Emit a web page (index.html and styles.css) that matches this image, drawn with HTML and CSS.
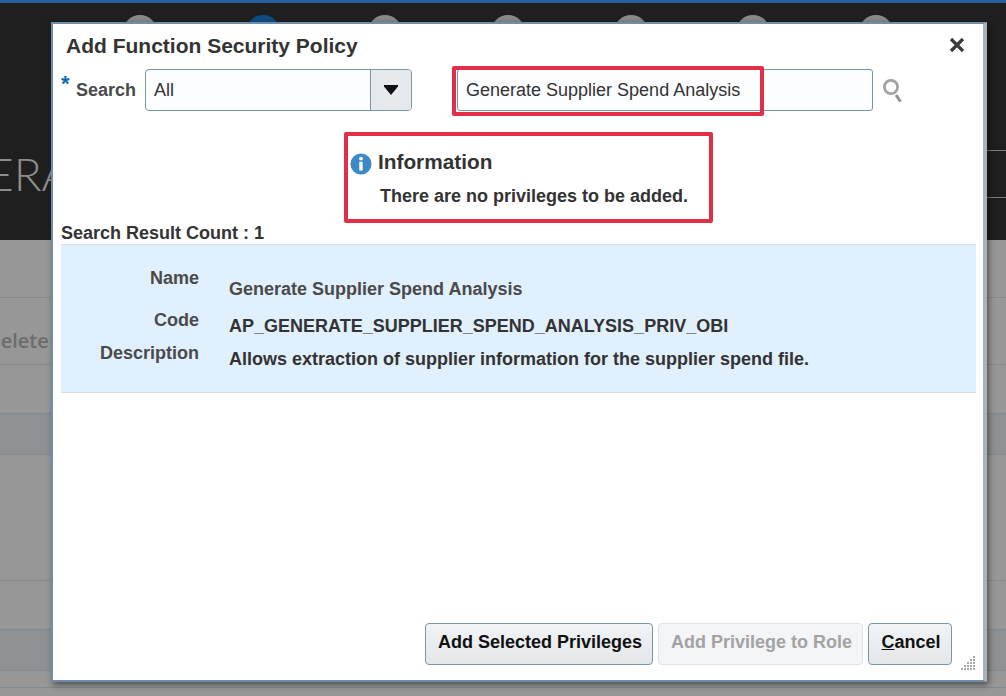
FILE: index.html
```html
<!DOCTYPE html>
<html lang="en">
<head>
<meta charset="utf-8">
<title>Add Function Security Policy</title>
<link rel="stylesheet" href="styles.css">
</head>
<body>
<div class="page">
  <header class="hero">
    <div class="train">
      <span class="stop"></span><span class="stop stop-active"></span><span class="stop"></span><span class="stop"></span><span class="stop"></span><span class="stop"></span><span class="stop"></span>
    </div>
    <div class="hero-title">ERAL</div>
    <div class="hero-lines"><span></span><span></span></div>
  </header>
  <div class="table">
    <div class="row r1"></div>
    <div class="row r2"><span class="delete">Delete</span></div>
    <div class="row r3"></div>
    <div class="row r4 shade"></div>
    <div class="row r5"></div>
    <div class="row r6"></div>
    <div class="row r7 shade"></div>
    <div class="row r8"></div>
  </div>
</div>

<section class="dialog">
  <div class="title-row">
    <h1 class="title">Add Function Security Policy</h1>
    <svg class="close" width="16" height="16" viewBox="0 0 16 16" aria-label="Close"><path d="M2 2 14 14M14 2 2 14" stroke="#3c3c3c" stroke-width="3.2" fill="none"/></svg>
  </div>
  <div class="search-row">
    <span class="req">*</span>
    <label class="search-label">Search</label>
    <div class="select">
      <span class="select-value">All</span>
      <span class="select-btn"><svg width="14" height="10" viewBox="0 0 14 10"><path d="M0 0H14V1.5L7 10 0 1.5Z" fill="#111"/></svg></span>
    </div>
    <div class="input">Generate Supplier Spend Analysis<span class="mark mark-input"></span></div>
    <svg class="magnifier" width="22" height="26" viewBox="0 0 22 26"><circle cx="9" cy="9" r="6.6" fill="none" stroke="#a3a3a3" stroke-width="2.8"/><path d="M14 17 18.5 23.5" stroke="#8f8f8f" stroke-width="3" fill="none"/></svg>
  </div>
  <div class="info">
    <div class="info-head">
      <svg class="info-icon" width="22" height="22" viewBox="0 0 22 22"><circle cx="11" cy="11" r="10.5" fill="#3b8ac6"/><circle cx="11" cy="5.6" r="1.9" fill="#fff"/><rect x="9.3" y="8.8" width="3.4" height="8.8" fill="#fff"/></svg>
      <span class="info-title">Information</span>
    </div>
    <p class="info-text">There are no privileges to be added.</p>
    <span class="mark mark-info"></span>
  </div>
  <div class="count">Search Result Count : 1</div>
  <div class="result">
    <div class="label l-name">Name</div><div class="value v-name">Generate Supplier Spend Analysis</div>
    <div class="label l-code">Code</div><div class="value v-code">AP_GENERATE_SUPPLIER_SPEND_ANALYSIS_PRIV_OBI</div>
    <div class="label l-desc">Description</div><div class="value v-desc">Allows extraction of supplier information for the supplier spend file.</div>
  </div>
  <div class="spacer"></div>
  <div class="actions">
    <button class="btn btn-add" type="button">Add Selected Privileges</button>
    <button class="btn btn-off" type="button" disabled>Add Privilege to Role</button>
    <button class="btn btn-cancel" type="button"><u>C</u>ancel</button>
  </div>
  <svg class="grip" width="14" height="14" viewBox="0 0 14 14"><path d="M12 0h2v2h-2zM12 3h2v2h-2zM9 3h2v2H9zM12 6h2v2h-2zM9 6h2v2H9zM6 6h2v2H6zM12 9h2v2h-2zM9 9h2v2H9zM6 9h2v2H6zM3 9h2v2H3zM12 12h2v2h-2zM9 12h2v2H9zM6 12h2v2H6zM3 12h2v2H3zM0 12h2v2H0z" fill="#a9a9a9"/></svg>
</section>
</body>
</html>
```
FILE: styles.css
```css
* { box-sizing: border-box; }
html, body { margin: 0; height: 100%; }
body { width: 1006px; height: 696px; overflow: hidden; position: relative; background: #979797; font-family: "Liberation Sans", Arial, sans-serif; color: #333; }

.page { display: flex; flex-direction: column; height: 696px; }
.hero { height: 240px; background: #1f1f1f; border-top: 3px solid #28609b; position: relative; overflow: hidden; flex: none; }
.train { display: flex; gap: 88.67px; padding: 12px 0 0 123px; }
.stop { width: 34px; height: 34px; border-radius: 50%; background: linear-gradient(#8c8c8c, #5f5f5f); flex: none; }
.stop-active { background: #0f4c82; }
.hero-title { position: absolute; left: -13px; top: 141px; font-family: Lato, sans-serif; font-weight: 300; font-size: 46px; line-height: 60px; color: #8d8d8d; white-space: nowrap; }
.hero-lines { position: absolute; right: 0; top: 147px; width: 19px; display: flex; flex-direction: column; gap: 46px; }
.hero-lines span { height: 1px; background: #7d7d7d; }

.table { flex: 1; display: flex; flex-direction: column; }
.row { border-bottom: 1px solid #808a90; flex: none; }
.r1 { height: 58px; }
.r2 { height: 67px; display: flex; align-items: center; padding-top: 18px; }
.r3 { height: 49px; }
.r4 { height: 41px; }
.r5 { height: 126px; }
.r6 { height: 49px; }
.r7 { height: 41px; }
.r8 { height: 17px; }
.shade { background: #8f9091; }
.delete { font-family: "Open Sans", sans-serif; font-size: 20px; font-weight: 600; color: #6c6c6c; margin-left: -14px; }

.dialog { position: absolute; left: 51px; top: 22px; width: 936px; height: 660px; background: #fff; border: 2px solid #6f8ca8; border-right: 4px solid #a8b2bb; box-shadow: 2px 3px 6px rgba(0,0,0,.45); display: flex; flex-direction: column; padding: 0 7px 0 8px; }

.title-row { display: flex; justify-content: space-between; align-items: center; height: 43px; padding: 1px 11px 1px 5px; flex: none; }
.title { margin: 0; font-size: 21px; font-weight: 700; color: #333; }
.close { margin-top: -1px; }

.search-row { height: 42px; display: flex; align-items: center; flex: none; position: relative; margin-top: 2px; }
.req { color: #0f6ab4; font-size: 22px; font-weight: 700; width: 15px; align-self: flex-start; line-height: 30px; }
.search-label { font-size: 18px; font-weight: 700; color: #4a4a4a; width: 69px; }
.select { width: 267px; height: 42px; border: 1px solid #7b95a8; border-radius: 4px; background: #fbfdff; display: flex; }
.select-value { flex: 1; font-size: 18px; line-height: 40px; padding-left: 8px; color: #333; }
.select-btn { width: 41px; background: #e6e9ec; border-left: 1px solid #7b95a8; border-radius: 0 3px 3px 0; display: flex; align-items: center; justify-content: center; }
.input { margin-left: 45px; width: 416px; height: 42px; border: 1px solid #7b95a8; border-radius: 3px; background: #fbfdff; font-size: 18px; line-height: 40px; padding-left: 8px; color: #333; position: relative; }
.magnifier { margin-left: 9px; margin-top: 2px; }

.mark { position: absolute; border: 4px solid #e22f47; border-radius: 2px; pointer-events: none; }
.mark-input { left: -6px; top: -4px; width: 312px; height: 50px; }

.info { position: relative; margin: 21px 0 0 283px; width: 369px; height: 91px; padding: 17px 0 0 6px; flex: none; }
.mark-info { inset: 0; }
.info-head { display: flex; align-items: center; gap: 6px; height: 26px; }
.info-icon { margin-top: 4px; }
.info-title { font-size: 20.8px; font-weight: 700; color: #333; }
.info-text { margin: 11px 0 0 30px; font-size: 18px; font-weight: 700; color: #333; line-height: 20px; }

.count { font-size: 18px; font-weight: 700; color: #333; height: 21px; line-height: 20px; flex: none; }
.result { flex: none; height: 149px; background: #e1f0fd; border-top: 1px solid #d9dfe4; border-bottom: 1px solid #d9dfe4; display: grid; grid-template-columns: 138px 1fr; column-gap: 30px; grid-template-rows: 34px 36px 33px; align-content: start; padding-top: 24px; font-size: 18px; }
.label { font-size: 18px; font-weight: 700; color: #4a4a4a; text-align: right; margin-top: -1px; }
.value { font-weight: 700; color: #333; }
.v-name { padding-top: 10px; color: #4a4a4a; }
.v-code { padding-top: 13px; }
.v-desc { padding-top: 10px; }
.l-code { padding-top: 8px; }
.l-desc { padding-top: 5px; }

.spacer { flex: 1; }
.actions { display: flex; justify-content: flex-end; gap: 5px; padding-right: 24px; margin-bottom: 15px; flex: none; }
.btn { height: 42px; font-family: inherit; font-size: 18px; font-weight: 700; border: 1px solid #7b95a8; border-radius: 4px; background: linear-gradient(#f1f4f7, #e3e7ea); color: #111; padding: 0 0 3px 2px; }
.btn-add { width: 228px; }
.btn-off { width: 205px; background: #f3f5f7; border-color: #dfe4e8; color: #a3a3a3; }
.btn-cancel { width: 84px; }
.grip { position: absolute; right: 8px; bottom: 10px; }
```
